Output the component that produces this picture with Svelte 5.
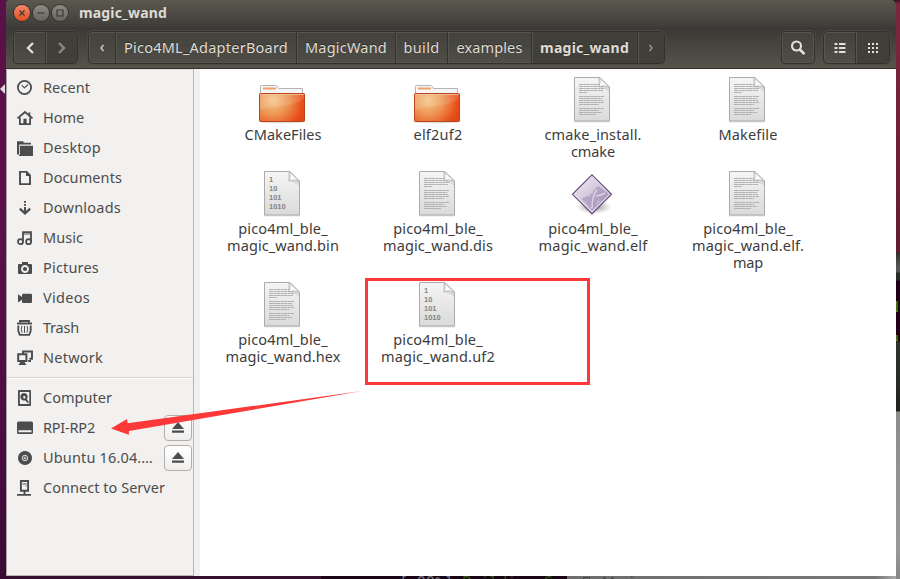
<script>
  // Narrow or widen a label's tracking so that it fills the given width.
  function fit(node, width) {
    const apply = () => {
      node.style.letterSpacing = '0px';
      const range = document.createRange();
      range.selectNodeContents(node);
      const natural = range.getBoundingClientRect().width;
      const count = [...node.textContent].length;
      node.style.letterSpacing = `${(width - natural) / count}px`;
    };
    apply();
    document.fonts.ready.then(apply);
  }

  const crumbs = [
    { name: 'Pico4ML_AdapterBoard', w: 181, t: 164 },
    { name: 'MagicWand', w: 99, t: 82 },
    { name: 'build', w: 52, t: 36 },
    { name: 'examples', w: 84, t: 66 },
    { name: 'magic_wand', w: 106, t: 89, active: true }
  ];

  const places = [
    { name: 'Recent', icon: 'recent', t: 47 },
    { name: 'Home', icon: 'home', t: 41 },
    { name: 'Desktop', icon: 'desktop', t: 58 },
    { name: 'Documents', icon: 'documents', t: 79 },
    { name: 'Downloads', icon: 'downloads', t: 78 },
    { name: 'Music', icon: 'music', t: 40 },
    { name: 'Pictures', icon: 'pictures', t: 56 },
    { name: 'Videos', icon: 'videos', t: 47 },
    { name: 'Trash', icon: 'trash', t: 36 },
    { name: 'Network', icon: 'network', t: 60 }
  ];

  const devices = [
    { name: 'Computer', icon: 'computer', t: 69 },
    { name: 'RPI-RP2', icon: 'drive', t: 52, eject: true },
    { name: 'Ubuntu 16.04.…', icon: 'disc', t: 110, eject: true },
    { name: 'Connect to Server', icon: 'server', t: 122 }
  ];

  const rows = [
    { h: 94, files: [
      { icon: 'folder', lines: [['CMakeFiles', 77]] },
      { icon: 'folder', lines: [['elf2uf2', 49]] },
      { icon: 'text', lines: [['cmake_install.', 97], ['cmake', 44]] },
      { icon: 'text', lines: [['Makefile', 59]] }
    ] },
    { h: 111, files: [
      { icon: 'binary', lines: [['pico4ml_ble_', 89.5], ['magic_wand.bin', 112]] },
      { icon: 'text', lines: [['pico4ml_ble_', 89.5], ['magic_wand.dis', 110]] },
      { icon: 'exec', lines: [['pico4ml_ble_', 89.5], ['magic_wand.elf', 109]] },
      { icon: 'text', lines: [['pico4ml_ble_', 89.5], ['magic_wand.elf.', 112], ['map', 30]] }
    ] },
    { h: 100, files: [
      { icon: 'text', lines: [['pico4ml_ble_', 89.5], ['magic_wand.hex', 115]] },
      { icon: 'binary', lines: [['pico4ml_ble_', 89.5], ['magic_wand.uf2', 114]] }
    ] }
  ];

  const textLines = [
    [8.5, 25], [10.5, 24], [12.5, 25], [14.5, 24], [16.5, 8],
    [20.5, 25], [22.5, 23], [24.5, 24], [26.5, 25], [28.5, 20],
    [32.5, 25], [34.5, 20], [36.5, 23], [38.5, 17]
  ];
</script>

{#snippet glyph(name)}
  <svg class="glyph" viewBox="0 0 16 16" width="16" height="16">
    {#if name === 'recent'}
      <circle cx="7.5" cy="7.5" r="6.6" class="line" stroke-width="1.8" />
      <path d="M4.7 5.2 7.4 7.9 11 4.5" class="line" stroke-width="1.1" />
    {:else if name === 'home'}
      <path d="M0.5 8.4 8 2l7.5 6.4" class="line" stroke-width="1.9" />
      <path d="M2.9 7.5v6.6h10.2V7.5" class="line" stroke-width="1.8" />
      <path d="M6.4 14V8.7h3.2V14z" />
      <path d="M11.5 2.4h1.8v4h-1.8z" />
    {:else if name === 'desktop'}
      <path d="M0 1.2h6l1 1.6h7v1.8H2.2v10H0z" /><path d="M3 5.7h13V16H2v-1.2h1z" />
    {:else if name === 'documents'}
      <path d="M3 1.9h6.6L13 5.3v8.8H3z" class="line" stroke-width="1.9" />
      <path d="M9 1.5V6h4.5z" />
    {:else if name === 'downloads'}
      <path d="M7 1h2v1.7H7zM7 4h2v1.7H7zM7 7h2v5H7z" />
      <path d="M2.8 8.6 8 13.4l5.2-4.8" class="line" stroke-width="2.2" />
    {:else if name === 'music'}
      <path d="M6 11.7V2.1h8v9.4" class="line" stroke-width="1.8" />
      <path d="M6 4h8" class="line" stroke-width="1" />
      <circle cx="3.5" cy="11.7" r="2.5" class="line" stroke-width="1.8" />
      <circle cx="11.6" cy="11.7" r="2.5" class="line" stroke-width="1.8" />
    {:else if name === 'pictures'}
      <path fill-rule="evenodd" d="M2 4h3V2h6v2h3q1 0 1 1v8q0 1-1 1H2q-1 0-1-1V5q0-1 1-1zM8 5a4 4 0 1 0 .01 0z" />
      <circle cx="8" cy="9" r="2.1" />
    {:else if name === 'videos'}
      <path d="M1 4.3 5 7V5q0-1.3 1.3-1.3h7.6q1.1 0 1.1 1.1v7q0 1.2-1.1 1.2H6.3Q5 13 5 11.7v-2L1 12.6z" />
    {:else if name === 'trash'}
      <path d="M3 2.8V1h9v1.8M1.3 5.5v5.500l1.500 3.900h9.400l1.500-3.900V5.5" class="line" stroke-width="1.8" />
      <path d="M0 3.500h15" class="line" stroke-width="1.900" />
      <path d="M4.8 6q-1 3.2.3 6.7M7.5 6v6.8M10.200 6q1 3.2-.3 6.7" class="line" stroke-width="1" />
    {:else if name === 'network'}
      <path d="M6 4V1.5h9v7.3h-2.6" class="line" stroke-width="1.9" />
      <path d="M1.2 4.3h8.2v6.6H1.2z" class="line" stroke-width="2" />
      <path d="M3.5 11.5h3.8l2 3.5H1.5zM11 10h3v2h-2.6z" />
    {:else if name === 'computer'}
      <path fill-rule="evenodd" d="M2 0h11q1 0 1 1v14q0 1-1 1H2q-1 0-1-1V1q0-1 1-1zM2.8 2v12h9.5V2z" />
      <path fill-rule="evenodd" d="M7.5 3a3.8 3.8 0 1 0 .8 7.4l2.6 2.8 1-.9-2-3.2A3.8 3.8 0 0 0 7.5 3zM7.3 6a1.2 1.2 0 1 1 0 2.4 1.2 1.2 0 0 1 0-2.4z" />
    {:else if name === 'drive'}
      <path fill-rule="evenodd" d="M1.5 1.5h13Q16 1.5 16 3v9.5q0 1.5-1.5 1.5h-13Q0 14 0 12.5V3q0-1.5 1.5-1.5zM1.5 10.2v2h13v-2z" />
    {:else if name === 'disc'}
      <path fill-rule="evenodd" d="M8 1a7 7 0 1 0 .01 0zM8 4.8a3.2 3.2 0 1 1-.01 0z" />
      <circle cx="8" cy="8" r="1.9" class="line" stroke-width="1" />
      <circle cx="8" cy="8" r=".7" />
    {:else if name === 'server'}
      <path d="M3.9 1h7.2v9.8H3.9z" class="line" stroke-width="1.9" />
      <path d="M5.5 3.5h4v1h-4zM8.5 5.6h1v1h-1zM6.6 11h1.9v3H14v1.8H0V14h6.6z" />
    {/if}
  </svg>
{/snippet}

{#snippet place(p)}
  <li>
    {@render glyph(p.icon)}
    <span class="place"><span use:fit={p.t}>{p.name}</span></span>
    {#if p.eject}
      <button class="eject" aria-label="Eject">
        <svg width="14" height="12" viewBox="0 0 14 12"><path d="M7 0 13 7H1zM1 8.5h12v2.2H1z" /></svg>
      </button>
    {/if}
  </li>
{/snippet}

{#snippet fileIcon(kind)}
  <svg class="file-icon" width="48" height="48" viewBox="0 0 48 48">
    {#if kind === 'folder'}
      <ellipse cx="24" cy="46" rx="22" ry="1.5" fill="#000" opacity=".13" />
      <path d="M2.5 18V10.5q0-1 1-1h14q1 0 1.6.8l1.6 2.2h23.8v6z" fill="#f5f5f5" stroke="#b4b4b4" />
      <path d="M5 11.5h13v2H5z" fill="#efa06f" />
      <rect x="1.5" y="17.5" width="45" height="28" rx=".8" fill="url(#folder)" stroke="#b9471b" />
      <path d="M2 18h44v4Q40 28 24 30T2 34z" fill="#fff" opacity=".12" />
      <path d="M2.5 18.5h43" stroke="#f6c6a0" opacity=".8" />
    {:else if kind === 'exec'}
      <ellipse cx="26" cy="37" rx="18" ry="7" fill="url(#shade)" />
      <path d="M24 4.8 43.5 24.3 24 43.8 4.500 24.3z" fill="url(#gem)" stroke="#6b4f79" stroke-width="1.2" />
      <path d="M12.500 28l2 1 1-2 2 .5 1.500-2 2.300 1 1.200-3 2.500-.2.300-3.300 2.500-.6.200-2 3-1 9.500 7.900-8 7.500q-2-1-2-4l-3 8-3 3.200z" fill="#a48fb8" opacity=".6" />
      <path d="M29 20q-5 6-5 18M28 26q4 0 9-3" fill="none" stroke="#e8e1ef" stroke-width="1.5" opacity=".75" />
      <path d="M24 6.6 41.7 24.3 24 42 6.3 24.3z" fill="none" stroke="#efe8f3" stroke-width="1" opacity=".75" />
    {:else}
      <path d="M6 45.8h36" stroke="#000" opacity=".16" />
      <path d="M6.5 1.5H32L41.5 11v34h-35z" fill="url(#paper)" stroke="#ababab" />
      <path d="M30 2h2l9 9v5q-3-4-11-4.500z" fill="#000" opacity=".09" />
      {#if kind === 'text'}
        {#each textLines as [y, w]}
          <path d="M11 {y}h{w}" stroke="#b0b0b0" stroke-dasharray="4 .4 2.5 .3" />
        {/each}
      {:else}
        <g class="bits">
          <text x="11" y="12">1</text>
          <text x="11" y="21">10</text>
          <text x="11" y="30">101</text>
          <text x="11" y="39">1010</text>
        </g>
      {/if}
      <path d="M31.5 2q1.5 4.500-.5 8.500 5-1.500 10 .5z" fill="#fdfdfd" stroke="#b4b4b4" stroke-width=".8" />
    {/if}
  </svg>
{/snippet}

<svg class="defs" width="0" height="0">
  <defs>
    <radialGradient id="folder" gradientUnits="userSpaceOnUse" cx="15" cy="24" r="34">
      <stop offset="0" stop-color="#f5c88d" /><stop offset=".45" stop-color="#ec9453" />
      <stop offset=".85" stop-color="#e9511c" /><stop offset="1" stop-color="#dd4814" />
    </radialGradient>
    <linearGradient id="paper" x1="0" y1="0" x2="0" y2="1">
      <stop offset="0" stop-color="#f5f5f5" /><stop offset="1" stop-color="#dadada" />
    </linearGradient>
    <linearGradient id="gem" x1="0" y1="0" x2="1" y2="1">
      <stop offset="0" stop-color="#eee8f4" /><stop offset=".5" stop-color="#d3c8dd" /><stop offset="1" stop-color="#a28cb4" />
    </linearGradient>
    <radialGradient id="shade">
      <stop offset="0" stop-color="#000" stop-opacity=".4" /><stop offset="1" stop-color="#000" stop-opacity="0" />
    </radialGradient>
  </defs>
</svg>

<div class="screen">
  <div class="left-edge"><i></i></div>
  <div class="middle">
    <main class="window">
      <header>
        <div class="titlebar">
          <button class="dot close" aria-label="Close"><svg width="16" height="16"><path d="M5.5 5.5l5 5m0-5l-5 5" /></svg></button>
          <button class="dot" aria-label="Minimize"><svg width="16" height="16"><path d="M4.5 8h7" /></svg></button>
          <button class="dot" aria-label="Maximize"><svg width="16" height="16"><path d="M5 5h6v6H5z" /></svg></button>
          <h1><span use:fit={88}>magic_wand</span></h1>
        </div>
        <div class="toolbar">
          <div class="group nav">
            <button aria-label="Back"><svg width="12" height="14"><path d="M9 2 4 7l5 5" stroke="#e4e1d8" stroke-width="2.3" /></svg></button>
            <button class="off" aria-label="Forward"><svg width="12" height="14"><path d="M3 2l5 5-5 5" stroke="#8a8880" stroke-width="2.3" /></svg></button>
          </div>
          <div class="group crumbs">
            <button style="width: 26px" aria-label="Scroll left"><svg width="6" height="8"><path d="M4.5 1 2 4l2.5 3" stroke="#d2cfc7" stroke-width="1.4" /></svg></button>
            {#each crumbs as c}
              <button class:active={c.active} style="width: {c.w}px"><span use:fit={c.t}>{c.name}</span></button>
            {/each}
            <button class="off" style="width: 27px" aria-label="Scroll right"><svg width="6" height="8"><path d="M1.5 1 4 4 1.5 7" stroke="#97948c" stroke-width="1.4" /></svg></button>
          </div>
          <div class="group search">
            <button aria-label="Search"><svg width="16" height="16"><circle cx="6.5" cy="6" r="4.5" stroke="#e4e1d8" stroke-width="2.1" /><path d="M9.8 9.5l4.7 4.7" stroke="#e4e1d8" stroke-width="2.6" /></svg></button>
          </div>
          <div class="group views">
            <button aria-label="List"><svg width="12" height="12"><path d="M.5 2h3m1.500 0h6.500M.5 6h3m1.500 0h6.500M.5 10h3m1.500 0h6.500" stroke="#e4e1d8" stroke-width="2" /></svg></button>
            <button class="active" aria-label="Grid"><svg width="12" height="12"><path d="M1 2h10M1 6h10M1 10h10" stroke="#e4e1d8" stroke-width="2" stroke-dasharray="2 2" /></svg></button>
          </div>
        </div>
      </header>
      <div class="body">
        <aside>
          <ul>{#each places as p}{@render place(p)}{/each}</ul>
          <ul>{#each devices as p}{@render place(p)}{/each}</ul>
        </aside>
        <section>
          {#each rows as row}
            <div class="row" style="height: {row.h}px">
              {#each row.files as f}
                <figure>
                  {@render fileIcon(f.icon)}
                  <figcaption>
                    {#each f.lines as [line, w]}<div><span use:fit={w}>{line}</span></div>{/each}
                  </figcaption>
                </figure>
              {/each}
            </div>
          {/each}
        </section>
      </div>
    </main>
    <div class="under">
      <div class="wallpaper"></div>
      <div class="terminal"><span class="pct">[ 99%]</span><span>Building C o</span></div>
      <div class="panel"><i></i><span>Music</span></div>
    </div>
  </div>
  <div class="right-edge"><i></i><i class="small"></i></div>

  <div class="mark"></div>
  <svg class="arrow" width="254" height="54" viewBox="0 0 254 54">
    <path d="M1 43.5 17 34l.7 4.3L252 6 19 46l-.2 3.8z" />
  </svg>
</div>

<style>
  :global(body) { margin: 0; overflow: hidden; }
  .defs { position: absolute; }
  button { padding: 0; margin: 0; border: 0; background: none; font: inherit; color: inherit; display: flex; align-items: center; justify-content: center; }
  span { white-space: nowrap; }
  .screen { position: relative; display: flex; width: 900px; height: 579px; overflow: hidden; font: 14.5px/17px "Noto Sans", sans-serif; color: #3c3c3c; }
  .left-edge { width: 6px; display: flex; background: linear-gradient(#5a1048, #5b0f4d 35%, #4e0d43 70%, #3a0a35); }
  .left-edge i { align-self: flex-start; margin-top: 84px; border: 5px solid transparent; border-right-color: #ddd; border-left: 0; }
  .middle { display: flex; flex-direction: column; width: 890px; background: #3a1530; }
  .window { display: flex; flex-direction: column; height: 576px; flex: none; box-sizing: border-box; }
  header { height: 69px; box-sizing: border-box; border-bottom: 1px solid #32312d; color: #dfdbd2; border-radius: 3px 5px 0 0; background: linear-gradient(#5b584f, #3e3d39 27px, #3a3935 28px, #3d3c37 33px, #56534b 67px); }
  .titlebar { display: flex; align-items: center; height: 26px; padding: 0 0 1px 7.5px; box-sizing: border-box; gap: 3px; }
  .dot { width: 16px; height: 16px; border-radius: 50%; background: linear-gradient(#8e8b84, #66645e); box-shadow: 0 0 0 1px #33322e; }
  .dot svg { fill: none; stroke: #3a3935; stroke-width: 1.2; }
  .dot.close { background: linear-gradient(#f58866, #df4f22); }
  h1 { margin: 0 0 1px 8.5px; font: bold 14px/17px "Noto Sans", sans-serif; }
  .toolbar { display: flex; padding: 5px 0 0 7px; height: 34px; }
  .group { display: flex; height: 33px; box-sizing: border-box; border: 1px solid #32312d; border-radius: 5px; background: linear-gradient(#42413c, #4f4d46); box-shadow: inset 0 0 0 1px #57554d, 0 0 0 1px #4b4943; overflow: hidden; }
  .group button { box-sizing: border-box; flex: none; text-shadow: 0 -1px #2e2d2a; }
  .group button + button { border-left: 1px solid #33322e; box-shadow: inset 1px 0 #57554d; }
  .group svg { fill: none; }
  .group .active { background: #403f3a; font-weight: bold; font-size: 14px; }
  .group .off { background: #403f3a; }
  .nav { width: 65px; }
  .nav button { width: 31px; }
  .nav .off { width: 32px; }
  .crumbs { margin-left: 10px; width: 577px; }
  .search { margin-left: 116px; width: 34px; }
  .search button { width: 32px; }
  .views { margin-left: 8px; width: 67px; }
  .views button { width: 31px; }
  .views .active { width: 34px; }
  .body { display: flex; flex: 1; background: #fff; }
  aside { width: 188px; box-sizing: border-box; background: #f2f1f0; border: 1px solid #b8b5b2; border-top-color: #dedbd7; border-left-color: #a9a5a3; }
  section { flex: 1; border-left: 6px solid #f1f0ef; padding: 7px 0 0 4px; }
  ul { list-style: none; margin: 0; padding: 3px 0 4px; }
  ul + ul { border-top: 1px solid #d9d7d5; box-shadow: inset 0 1px #fbfbfb; padding-top: 5px; }
  li { display: flex; align-items: center; height: 30px; padding-left: 10px; color: #4c4c4c; }
  .glyph { flex: none; fill: #4c4c4c; overflow: visible; }
  .glyph .line { fill: none; stroke: #4c4c4c; }
  .place { margin: 0 0 2px 10px; width: 121px; flex: none; }
  .eject { width: 28px; height: 26px; box-sizing: border-box; border: 1px solid #b1aeab; border-radius: 4px; background: linear-gradient(#fff, #efeeed); fill: #4c4c4c; }
  .row { display: flex; }
  figure { margin: 0; width: 155px; display: flex; flex-direction: column; align-items: center; }
  .file-icon { display: block; }
  figcaption { padding: 2px 0 0 3px; text-align: center; height: 0; }
  .bits { font: bold 7.5px "Liberation Sans", sans-serif; fill: #858585; }
  .under { height: 3px; display: flex; overflow: hidden; }
  .wallpaper { width: 315px; background: #32102e; }
  .terminal { box-sizing: border-box; width: 246px; padding-left: 78px; display: flex; gap: 9px; overflow: hidden; background: #190515; font: 15px/14px "DejaVu Sans Mono", monospace; color: #2c5512; }
  .terminal .pct { color: #77747c; }
  .panel { flex: 1; display: flex; gap: 12px; padding-left: 16px; overflow: hidden; background: linear-gradient(90deg, #6e6e6e, #777 94%, #aaa); font-size: 14px; line-height: 12px; color: #454545; }
  .panel i { width: 5px; height: 9px; border: 1.500px solid #454545; margin-top: 1px; }
  .right-edge { width: 4px; background: linear-gradient(#3d1323, #7d273e 4px, #6b1f35 180px, #611c30 252px, #302f2b 253px, #555 266px, #555 272px, #292b28 273px, #292b28 280px, #200018 281px, #240019 341px, #30332e 342px, #22231f 411px, #8c8c8c 412px, #999 550px, #858585); }
  .right-edge i { display: block; width: 2px; height: 10px; margin-top: 301px; border-bottom: 1px solid #4e8f10; background: #3c6f0c; }
  .right-edge .small { height: 5px; margin-top: 23px; }
  .mark { position: absolute; left: 365px; top: 278px; width: 225px; height: 107px; box-sizing: border-box; border: 3px solid #fc3838; }
  .arrow { position: absolute; left: 110px; top: 385px; fill: #fc3838; }
</style>
